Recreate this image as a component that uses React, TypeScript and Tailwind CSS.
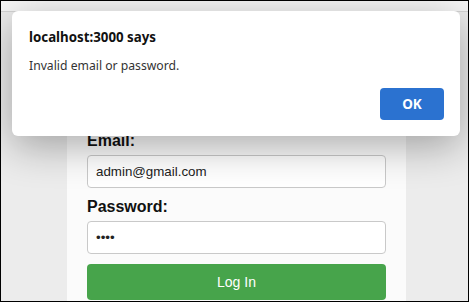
export default function App() {
  return (
    <div className="relative w-[469px] h-[302px] overflow-hidden border border-black bg-[#ececec] font-['Liberation_Sans',Arial,sans-serif]">
      <div className="h-[11px] bg-[#f6f6f6] border-b border-[#d4d4d4]" />
      <main className="pt-[20px]">
        <div className="ml-[66px] w-[339px] bg-[#fbfbfb] px-[20px] pt-[100px] pb-[20px]">
          <label className="block text-[16px] leading-[18px] font-bold text-[#111] mb-[5px]">Email:</label>
          <input
            type="email"
            defaultValue="admin@gmail.com"
            className="block w-full h-[33px] mb-[10px] rounded-[4px] border border-[#c9c9c9] bg-white px-[8px] text-[13.33px] text-[#222] outline-none"
          />
          <label className="block text-[16px] leading-[18px] font-bold text-[#111] mb-[5px]">Password:</label>
          <input
            type="password"
            defaultValue="1234"
            className="block w-full h-[33px] mb-[10px] rounded-[4px] border border-[#c9c9c9] bg-white px-[8px] text-[13.33px] text-[#222] outline-none"
          />
          <button className="w-full h-[36px] rounded-[4px] bg-[#47a44b] text-white text-[14px] font-normal">
            Log In
          </button>
        </div>
      </main>

      {/* browser alert */}
      <div className="absolute left-[11px] top-[10px] w-[448px] h-[125px] rounded-[6px] bg-white shadow-[0_10px_40px_rgba(0,0,0,0.32)] px-[17px] pt-[16px] font-['Noto_Sans','Open_Sans',sans-serif]">
        <p className="text-[13.3px] leading-[20px] font-bold text-[#111]">localhost:3000 says</p>
        <p className="mt-[9px] text-[12.2px] leading-[20px] text-[#333]">Invalid email or password.</p>
        <button className="absolute right-[16px] bottom-[16px] w-[64px] h-[32px] rounded-[4px] bg-[#2b72d0] text-white text-[13.5px] font-bold">
          OK
        </button>
      </div>
    </div>
  );
}
